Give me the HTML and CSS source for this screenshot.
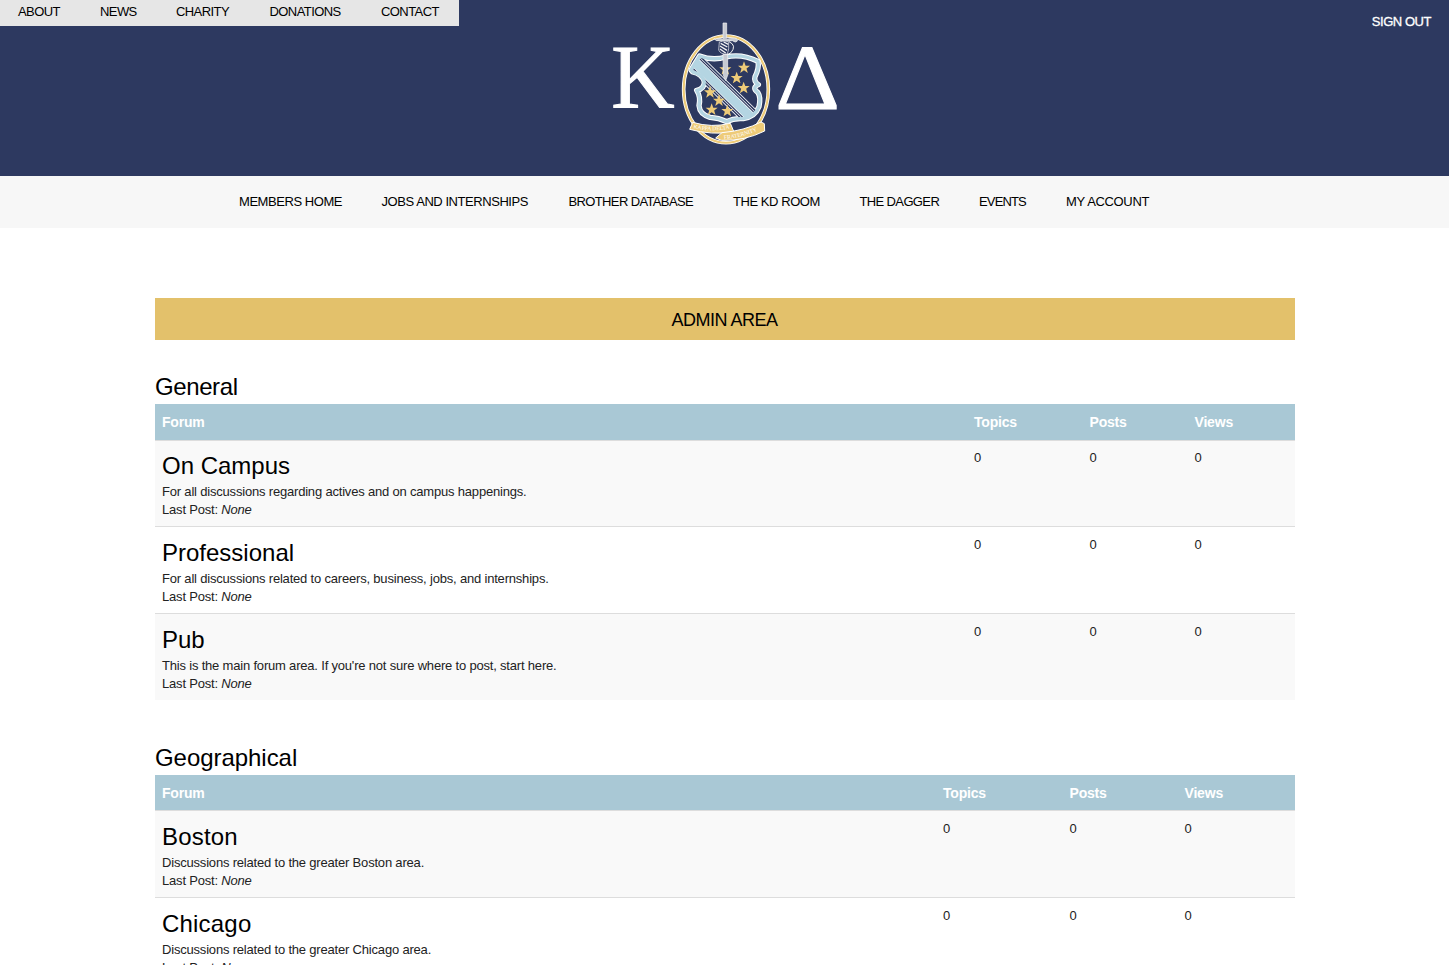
FILE: index.html
```html
<!DOCTYPE html>
<html lang="en">
<head>
<meta charset="utf-8">
<title>Kappa Delta – Forum</title>
<link rel="stylesheet" href="styles.css">
</head>
<body>
<header class="masthead">
  <nav class="top-nav"><a>ABOUT</a><a>NEWS</a><a>CHARITY</a><a>DONATIONS</a><a>CONTACT</a></nav>
  <svg class="logo" viewBox="0 0 750 420" role="img" aria-label="Kappa Delta">
    <defs>
      <path id="star" d="M0-19 4.8-6 18-6 7.500 2.500 11.500 16 0 8-11.500 16-7.500 2.500-18-6-4.800-6Z"/>
      <path id="shield" d="M299 123Q338 138 378 126Q425 115 474 139Q478 160 465 185Q461 199 475 209Q454 218 474 233Q483 246 477 275Q466 305 430 311Q401 309 380 320Q356 308 330 307Q299 298 297 272Q303 246 290 226Q313 222 313 200Q306 177 278 171L273 165Z"/>
      <clipPath id="shield-clip"><use href="#shield"/></clipPath>
    </defs>
    <text class="greek" x="34" y="278" font-size="272" textLength="190" lengthAdjust="spacingAndGlyphs">Κ</text>
    <text class="greek" x="526" y="281" font-size="280" textLength="194" lengthAdjust="spacingAndGlyphs">Δ</text>
    <ellipse cx="378" cy="223" rx="127" ry="160" fill="none" stroke="#fff" stroke-width="11"/>
    <ellipse cx="378" cy="223" rx="127" ry="160" fill="none" stroke="#eecb78" stroke-width="6"/>
    <use href="#shield" class="shield-edge"/>
    <g clip-path="url(#shield-clip)" fill="none">
      <path d="M275 132 460 314" stroke="#fff" stroke-width="56"/>
      <path d="M275 132 460 314" stroke="#2d3960" stroke-width="51"/>
      <path d="M275 132 460 314" stroke="#fff" stroke-width="42"/>
      <path d="M275 132 460 314" stroke="#2d3960" stroke-width="38"/>
      <path d="M275 132 460 314" stroke="#fff" stroke-width="31"/>
      <path d="M275 132 460 314" stroke="#b4d5e2" stroke-width="27"/>
    </g>
    <use href="#shield" class="shield-line"/>
    <g class="stars">
      <use href="#star" x="376" y="163"/><use href="#star" x="432" y="158"/><use href="#star" x="410" y="189"/><use href="#star" x="431" y="219"/>
      <use href="#star" x="330" y="232"/><use href="#star" x="357" y="257"/><use href="#star" x="335" y="284"/><use href="#star" x="382" y="288"/>
    </g>
    <g stroke="#f4f4f4" fill="#c7cad2" stroke-width="2">
      <path d="M369 118H383V181L377 197 370 181Z"/>
      <path d="M369 24H380V70H369Z"/>
      <path d="M342 70Q349 78 357 70Q378 76 397 69Q413 67 412 78Q407 85 397 77Q376 81 357 77Q347 80 342 70Z"/>
      <path d="M358 81Q378 75 386 82Q388 104 382 117Q362 119 356 105Z" fill="#2d3960"/>
      <path d="M362 85 382 96M360 93 381 106M360 102 377 114M371 81 385 88" stroke-width="4"/>
      <path d="M387 80Q411 91 393 113L382 119" fill="none" stroke-width="3"/>
    </g>
    <g fill="#eecb78" stroke="#fff" stroke-width="3">
      <path d="M278 322Q335 339 391 325L402 351Q334 361 269 343Z"/>
      <path d="M366 353Q434 347 483 321L493 326 494 348Q435 378 365 376L347 369Z"/>
    </g>
    <path id="motto-left" d="M280 340Q338 352 393 340" fill="none"/>
    <path id="motto-right" d="M372 373Q428 368 477 344" fill="none"/>
    <text class="motto"><textPath href="#motto-left" textLength="110">KAPPA DELTA</textPath></text>
    <text class="motto"><textPath href="#motto-right" textLength="104">FRATERNITY</textPath></text>
  </svg>
  <a class="sign-out">SIGN OUT</a>
</header>
<nav class="main-nav"><a>MEMBERS HOME</a><a>JOBS AND INTERNSHIPS</a><a class="tight">BROTHER DATABASE</a><a>THE KD ROOM</a><a class="tight">THE DAGGER</a><a class="tighter">EVENTS</a><a class="loose">MY ACCOUNT</a></nav>
<main class="content">
  <a class="admin">ADMIN AREA</a>
  <section class="board general">
    <h2>General</h2>
    <div class="row head"><span>Forum</span><span>Topics</span><span>Posts</span><span>Views</span></div>
    <div class="row shaded"><div><h3>On Campus</h3><p>For all discussions regarding actives and on campus happenings.</p><p class="last">Last Post: <em>None</em></p></div><span>0</span><span>0</span><span>0</span></div>
    <div class="row"><div><h3>Professional</h3><p>For all discussions related to careers, business, jobs, and internships.</p><p class="last">Last Post: <em>None</em></p></div><span>0</span><span>0</span><span>0</span></div>
    <div class="row shaded"><div><h3>Pub</h3><p>This is the main forum area. If you're not sure where to post, start here.</p><p class="last">Last Post: <em>None</em></p></div><span>0</span><span>0</span><span>0</span></div>
  </section>
  <section class="board geographical">
    <h2>Geographical</h2>
    <div class="row head"><span>Forum</span><span>Topics</span><span>Posts</span><span>Views</span></div>
    <div class="row shaded"><div><h3>Boston</h3><p>Discussions related to the greater Boston area.</p><p class="last">Last Post: <em>None</em></p></div><span>0</span><span>0</span><span>0</span></div>
    <div class="row"><div><h3>Chicago</h3><p>Discussions related to the greater Chicago area.</p><p class="last">Last Post: <em>None</em></p></div><span>0</span><span>0</span><span>0</span></div>
  </section>
</main>
</body>
</html>
```
FILE: styles.css
```css
* { box-sizing: border-box; }
body { margin: 0; height: 965px; overflow: hidden; background: #fff; color: #222; font: 13px/18px "Liberation Sans", Arial, sans-serif; }
h2, h3, p { margin: 0; }
.masthead { display: grid; grid-template-columns: 600px 250px 1fr; align-items: start; height: 176px; background: #2d3960; }
.top-nav { display: grid; grid-template-columns: 82px 76px 93.5px 111.5px auto; width: 459px; height: 26px; padding-left: 18px; background: #e6e6e6; color: #000; line-height: 24px; letter-spacing: -.58px; white-space: nowrap; }
.logo { width: 250px; height: 140px; margin-top: 15px; }
.greek { font-family: "Liberation Serif", serif; fill: #fff; stroke: #fff; stroke-width: 3px; }
.shield-edge { fill: #2d3960; stroke: #fff; stroke-width: 16px; stroke-linejoin: round; }
.shield-line { fill: none; stroke: #b4d5e2; stroke-width: 10px; stroke-linejoin: round; }
.stars { fill: #eecb78; }
.motto { font: 17px "Liberation Serif", serif; fill: #fff; }
.sign-out { justify-self: end; margin: 13px 18px 0 0; color: #fff; letter-spacing: -.45px; -webkit-text-stroke: .3px #fff; }
.main-nav { display: grid; grid-template-columns: 142.5px 187px 164.5px 126.5px 119.5px 87px auto; height: 52px; padding-left: 239px; background: #f7f7f7; color: #000; line-height: 51px; letter-spacing: -.44px; white-space: nowrap; }
.tight { letter-spacing: -.63px; }
.tighter { letter-spacing: -.85px; }
.loose { letter-spacing: -.34px; }
.content { width: 1140px; margin: 70px 0 0 155px; }
.admin { display: block; height: 42px; padding-right: 1px; background: #e3c16b; color: #000; text-align: center; font-size: 18px; line-height: 44px; letter-spacing: -.5px; }
.board { padding-top: 31px; }
.board + .board { padding-top: 42px; }
.board h2 { height: 33px; font-size: 24px; line-height: 32px; font-weight: 400; color: #000; letter-spacing: -.4px; }
.geographical h2 { letter-spacing: -.05px; }
.row { display: grid; height: 87px; border-top: 1px solid #ddd; letter-spacing: -.19px; }
.general .row { grid-template-columns: 811.5px 115.5px 105px 1fr; }
.geographical .row { grid-template-columns: 780.5px 126.5px 115px 1fr; }
.row > * { padding: 9px 0 0 7.5px; }
.row > :first-child { padding-left: 7px; }
.row.head { height: 36px; border: 0; background: #a9c8d5; color: #fff; font-size: 14px; font-weight: 700; line-height: 20px; }
.row.head > * { padding-top: 8px; }
.geographical .row.head { height: 35px; }
.general .head + .row { height: 86px; }
.general .head + .row > * { padding-top: 8px; }
.shaded { background: #f9f9f9; }
.row h3 { height: 34px; font-size: 24px; line-height: 34px; font-weight: 400; color: #000; letter-spacing: 0; }
.geographical h3 { letter-spacing: .2px; }
```
